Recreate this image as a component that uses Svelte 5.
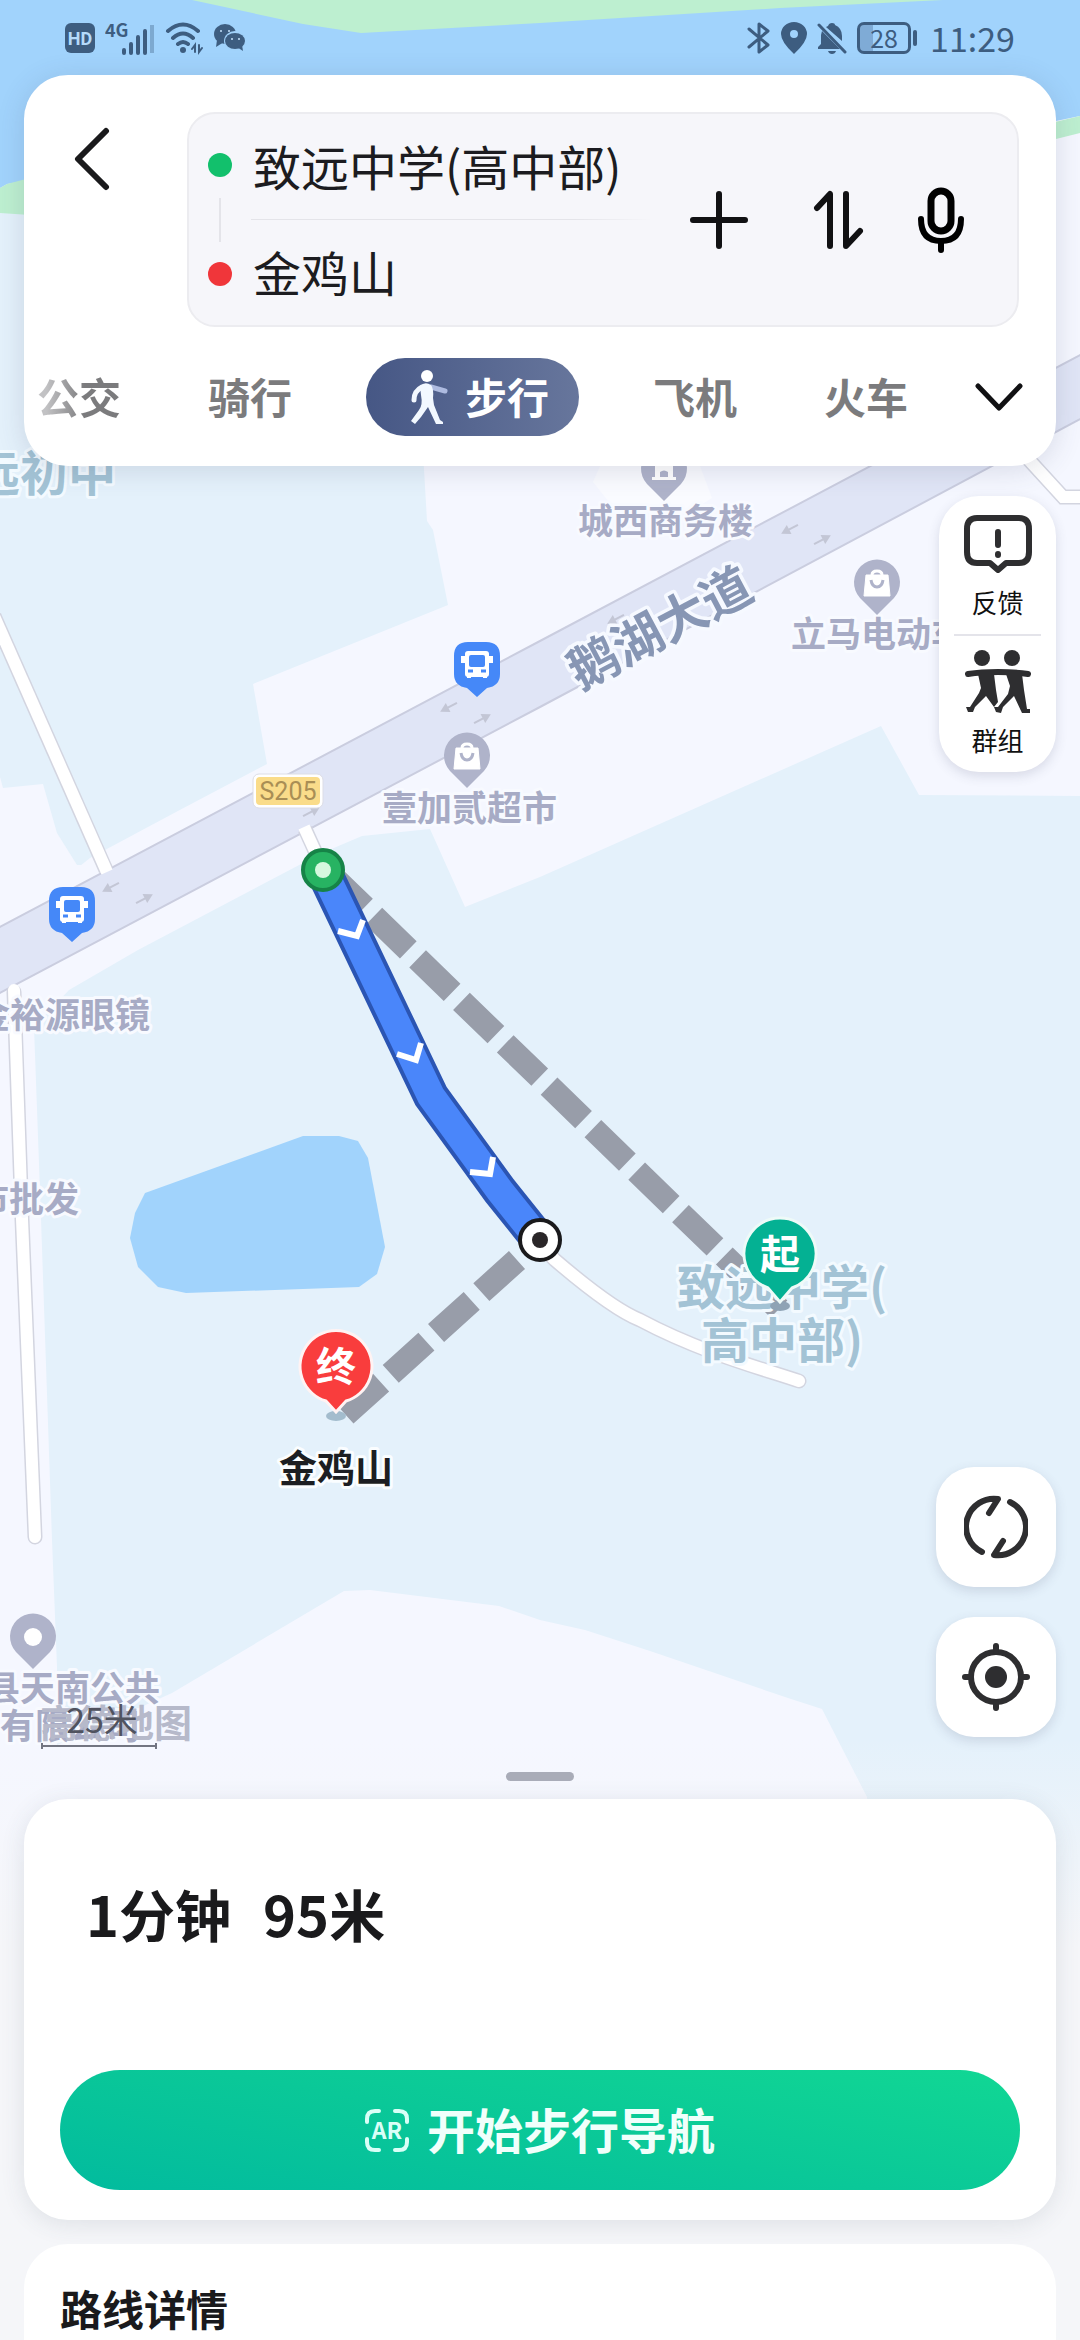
<script>
  let origin = '致远中学(高中部)';
  let destination = '金鸡山';
  let mode = '步行';

  const modes = ['公交', '骑行', '步行', '飞机', '火车'];

  const busStops = [
    { x: 477, y: 665 },
    { x: 72, y: 910 }
  ];

  const pins = [
    { x: 467, y: 756, kind: 'shop' },
    { x: 877, y: 583, kind: 'shop' },
    { x: 664, y: 469, kind: 'office' },
    { x: 33, y: 1637, kind: 'dot' }
  ];

  const places = [
    { name: '城西商务楼', x: 578, y: 534 },
    { name: '立马电动车', x: 791, y: 647 },
    { name: '壹加贰超市', x: 382, y: 821 },
    { name: '金裕源眼镜', x: 150, y: 1028, anchor: 'end' },
    { name: '市批发', x: 79, y: 1212, anchor: 'end' },
    { name: '县天南公共', x: 160, y: 1701, anchor: 'end' },
    { name: '有限公司', x: 0, y: 1739 }
  ];

  const laneArrows = [
    { x: 449, y: 707, angle: 152 },
    { x: 482, y: 719, angle: -28 },
    { x: 111, y: 887, angle: 152 },
    { x: 144, y: 899, angle: -28 },
    { x: 790, y: 529, angle: 152 },
    { x: 822, y: 540, angle: -28 },
    { x: 311, y: 812, angle: -28 },
    { x: 616, y: 619, angle: 152 }
  ];
</script>

<div class="app">
  <svg class="map" viewBox="0 0 1080 2340" preserveAspectRatio="xMidYMin slice" role="img" aria-label="地图">
    <rect width="1080" height="2340" fill="#e4f1fb" />

    <!-- land -->
    <g fill="#f5f7ff">
      <path d="M420 400L427 521L433 530L448 605L253 684L267 764L176 812L90 858L0 930V1000L1080 430V100H420Z" />
      <path d="M0 777L3 788L43 784L57 833L77 865H100L0 930Z" />
      <path d="M0 990L560 690L1080 410V796L919 795L881 726L540 877L465 907L430 829L362 836L322 853L138 950L69 990L34 1027L41 1219L52 1540L57 1667V1745L172 1693L344 1591L370 1590L499 1606L540 1620L585 1630L650 1651L788 1698L822 1709L867 1797V2340H0Z" />
    </g>
    <path d="M600 466L593 482L612 506L690 512L712 498L700 466Z" fill="#fafbff" />

    <!-- water and banks -->
    <path d="M0 0H1080V116L1056 121L900 160H60L24 181L7 184L0 188Z" fill="#a1d3fc" />
    <path d="M192 0L303 24L361 33L540 23L780 8L943 0Z" fill="#bdefd0" />
    <path d="M0 188L7 184L60 170V217L0 213Z" fill="#bdefd0" />
    <path d="M1080 116L1030 128V146L1056 139L1080 133Z" fill="#bdefd0" />
    <path d="M145 1193L303 1136H339L358 1141L368 1158L385 1247L377 1274L359 1287L186 1293L158 1287L138 1267L130 1238L135 1213Z" fill="#a1d3fc" />

    <!-- main road -->
    <path d="M-4 929L540 641L1084 353V417L540 707L-4 995Z" fill="#e0e5f6" stroke="#cacddf" stroke-width="2" />
    {#each laneArrows as arrow}
      <g transform="translate({arrow.x} {arrow.y}) rotate({arrow.angle})">
        <path d="M-9 0H3" stroke="#c3c6d5" stroke-width="2" />
        <path d="M1 -5L10 0L1 5Z" fill="#c3c6d5" />
      </g>
    {/each}

    <!-- side streets -->
    <g class="street-edge">
      <path d="M-6 616L106 870" />
      <path d="M14 992L22 1219L35 1537" stroke-linecap="round" />
      <path d="M1020 450L1063 497H1084" />
      <path d="M305 829L320 862" />
      <path d="M540 1245L555 1260C590 1290 620 1312 640 1320C700 1352 760 1368 799 1381" stroke-linecap="round" />
    </g>
    <g class="street">
      <path d="M-6 616L107 872" />
      <path d="M14 990L22 1219L35 1537" stroke-linecap="round" />
      <path d="M1020 450L1063 497H1084" />
      <path d="M304 827L320 862" />
      <path d="M540 1245L555 1260C590 1290 620 1312 640 1320C700 1352 760 1368 799 1381" stroke-linecap="round" />
    </g>

    <!-- walking links off the road network -->
    <path class="link" d="M330 874L779 1309" />
    <path class="link" d="M517 1260L344 1416" />

    <!-- place names -->
    <text class="area" x="116" y="491" text-anchor="end">远初中</text>
    <text class="area" x="677" y="1305">致远中学(</text>
    <text class="area" x="701" y="1358">高中部)</text>
    {#each places as place}
      <text class="place" x={place.x} y={place.y} text-anchor={place.anchor || 'start'}>{place.name}</text>
    {/each}
    <text class="road-name" transform="translate(660 628) rotate(-28)" y="18" text-anchor="middle">鹅湖大道</text>

    <rect x="253" y="774" width="70" height="34" rx="6" fill="#fff" stroke="#dcdde6" />
    <rect x="256" y="777" width="64" height="28" rx="4" fill="#fadc8a" />
    <text class="road-no" x="288" y="800" text-anchor="middle">S205</text>

    {#each busStops as stop}
      <g transform="translate({stop.x} {stop.y})">
        <path d="M-9 -23H9Q23 -23 23 -9V9Q23 21 10 23L0 32L-10 23Q-23 21 -23 9V-9Q-23 -23 -9 -23Z" fill="#4588f8" />
        <path d="M-9 -14H9Q12 -14 12 -11V9Q12 12 9 12H-9Q-12 12 -12 9V-11Q-12 -14 -9 -14Z" fill="#fff" />
        <path d="M-14 -9V-2M14 -9V-2M-8 10V13M8 10V13" stroke="#fff" stroke-width="4" />
        <rect x="-8" y="-10" width="16" height="12" rx="2" fill="#4588f8" />
        <path d="M-9 6H-4M4 6H9" stroke="#4588f8" stroke-width="3" />
      </g>
    {/each}

    {#each pins as pin}
      <g transform="translate({pin.x} {pin.y})">
        <path d="M0 32L-17 15A23 23 0 1 1 17 15Z" fill="#afb3ca" />
        {#if pin.kind === 'shop'}
          <path d="M-11 -8H11L13 13H-13Z" fill="#fff" stroke="#fff" stroke-linejoin="round" />
          <path d="M-5 -8Q-5 -12 0 -12Q5 -12 5 -8" fill="none" stroke="#fff" stroke-width="3" />
          <path d="M-6 -3Q-5 4 0 4Q5 4 6 -3" fill="none" stroke="#afb3ca" stroke-width="3" />
        {:else if pin.kind === 'office'}
          <path d="M-9 -10H9V8H12V11H-12V8H-9Z" fill="#fff" />
          <path d="M-4 8V3Q0 0 4 3V8Z" fill="#afb3ca" />
        {:else}
          <circle r="9" fill="#fff" />
        {/if}
      </g>
    {/each}

    <!-- route -->
    <path d="M323 870L431 1096L500 1191L540 1241" fill="none" stroke="#2b55b3" stroke-width="36" />
    <path d="M323 870L431 1096L500 1191L540 1241" fill="none" stroke="#4a86fa" stroke-width="28" />
    <g fill="none" stroke="#fff" stroke-width="6">
      <path d="M338 931L357 936L363 920" />
      <path d="M397 1054L416 1060L421 1043" />
      <path d="M470 1172L490 1174L493 1157" />
    </g>
    <circle cx="323" cy="870" r="20" fill="#27b362" stroke="#168347" stroke-width="4" />
    <circle cx="323" cy="870" r="8" fill="#d5f8de" />
    <circle cx="540" cy="1240" r="20" fill="#fff" stroke="#1a1a1c" stroke-width="4" />
    <circle cx="540" cy="1240" r="8" fill="#2a2628" />

    <ellipse cx="780" cy="1306" rx="10" ry="5" fill="#8fa3b5" />
    <path d="M780 1302L768 1288A36 36 0 1 1 792 1288Z" fill="#04b193" stroke="#eefaf8" stroke-width="3" />
    <text class="pin-text" x="780" y="1269" text-anchor="middle">起</text>

    <ellipse cx="336" cy="1416" rx="10" ry="5" fill="#a3bccd" />
    <path d="M336 1412L326 1401A36 36 0 1 1 346 1401Z" fill="#f93d3d" stroke="#fff3f3" stroke-width="3" />
    <text class="pin-text" x="336" y="1381" text-anchor="middle">终</text>
    <text class="end-name" x="336" y="1482" text-anchor="middle">金鸡山</text>

    <!-- scale and watermark -->
    <text class="watermark" x="40" y="1737">高德地图</text>
    <text class="scale" x="102" y="1733" text-anchor="middle">25米</text>
    <path d="M42 1743V1749M42 1746H156M156 1743V1749" fill="none" stroke="#6c6f7c" stroke-width="2" />
  </svg>

  <header class="status">
    <div class="status-group">
      <span class="hd">HD</span>
      <svg width="50" height="34" viewBox="0 0 50 34">
        <text x="0" y="16" font-size="18" font-weight="700" fill="currentColor">4G</text>
        <path d="M19 29V32M26 23V32M33 16V32M40 10V32" stroke="currentColor" stroke-width="4" stroke-linecap="round" />
        <path d="M47 4V32" stroke="currentColor" stroke-width="4" opacity=".35" />
      </svg>
      <svg width="38" height="34" viewBox="0 0 38 34" fill="none" stroke="currentColor" stroke-width="4" stroke-linecap="round">
        <path d="M3 10Q18 -3 33 10M8 17Q18 8 28 17M13 23Q18 19 23 23" />
        <circle cx="18" cy="29" r="3" fill="currentColor" stroke="none" />
        <path d="M30 31V24L27 28M34 24V31L37 27" stroke-width="2" />
      </svg>
      <svg width="34" height="34" viewBox="0 0 34 34" fill="currentColor">
        <ellipse cx="12" cy="13" rx="11" ry="10" />
        <path d="M4 19L3 26L11 21Z" />
        <ellipse cx="22" cy="20" rx="11" ry="10" fill="#a1d2fa" />
        <ellipse cx="22" cy="20" rx="10" ry="8" />
        <path d="M24 26L30 30L29 24Z" />
        <g fill="#c4e2fb"><circle cx="8" cy="10" r="1" /><circle cx="16" cy="10" r="1" /><circle cx="19" cy="18" r="1" /><circle cx="26" cy="18" r="1" /></g>
      </svg>
    </div>
    <div class="status-group">
      <svg width="24" height="34" viewBox="0 0 24 34" fill="none" stroke="currentColor" stroke-width="3" stroke-linejoin="round">
        <path d="M2 8L21 24L12 31V3L21 10L2 26" stroke-linecap="round" />
      </svg>
      <svg width="26" height="34" viewBox="0 0 26 34">
        <path d="M13 33Q0 21 0 13A13 12 0 0 1 26 13Q26 21 13 33ZM13 9A4 4 0 1 0 13 17A4 4 0 1 0 13 9Z" fill="currentColor" fill-rule="evenodd" />
      </svg>
      <svg width="30" height="34" viewBox="0 0 30 34" fill="currentColor">
        <path d="M11 5Q12 2 15 2Q18 2 18 4Q25 7 25 15V20L9 6ZM5 10L23 28H1V26L4 23V14ZM11 30H19Q18 33 15 33Q12 33 11 30Z" />
        <path d="M2 4L28 31" stroke="currentColor" stroke-width="3" stroke-linecap="round" />
      </svg>
      <span class="battery"><span class="level">28</span></span>
      <time class="clock">11:29</time>
    </div>
  </header>

  <section class="search">
    <div class="search-row">
      <button type="button" class="icon-btn back" aria-label="返回">
        <svg width="36" height="64" viewBox="0 0 36 64" fill="none" stroke="#1a1a1c" stroke-width="6" stroke-linecap="round" stroke-linejoin="round">
          <path d="M32 4L4 32L32 60" />
        </svg>
      </button>
      <div class="endpoints">
        <div class="track">
          <span class="dot start"></span>
          <span class="rail"></span>
          <span class="dot end"></span>
        </div>
        <div class="inputs">
          <input type="text" aria-label="起点" bind:value={origin} />
          <div class="rule"></div>
          <input type="text" aria-label="终点" bind:value={destination} />
        </div>
        <div class="actions">
          <button type="button" class="icon-btn add" aria-label="添加途经点">
            <svg width="60" height="60" viewBox="0 0 60 60" stroke="#111113" stroke-width="6" stroke-linecap="round">
              <path d="M30 4V56M4 30H56" />
            </svg>
          </button>
          <button type="button" class="icon-btn" aria-label="交换起终点">
            <svg width="60" height="60" viewBox="0 0 60 60" fill="none" stroke="#111113" stroke-width="6" stroke-linecap="round" stroke-linejoin="round">
              <path d="M9 18L22 4V56M38 4V56L52 41" />
            </svg>
          </button>
          <button type="button" class="icon-btn" aria-label="语音输入">
            <svg width="60" height="66" viewBox="-6 0 60 66" fill="none" stroke="#000">
              <rect x="14" y="4" width="20" height="40" rx="10" stroke-width="7" />
              <path d="M4 32Q4 54 24 54Q44 54 44 32M24 54V63" stroke-width="6" stroke-linecap="round" />
            </svg>
          </button>
        </div>
      </div>
    </div>

    <nav class="modes">
      <div class="mode-list">
        {#each modes as item}
          <button type="button" class="mode" class:active={item === mode} on:click={() => (mode = item)}>
            {#if item === mode}
              <svg width="40" height="56" viewBox="0 0 40 56">
                <circle cx="18" cy="7" r="6" fill="#fff" />
                <path d="M22 18L36 22" stroke="#aebbe0" stroke-width="5" stroke-linecap="round" />
                <path d="M11 17Q16 12 22 16Q25 20 24 29L25 36L31 51L34 53V55H27L19 38L12 48L6 55L2 52L10 41Q14 36 12 26Z" fill="#f2f8ff" />
                <path d="M13 18Q5 22 5 31" fill="none" stroke="#f2f8ff" stroke-width="5" stroke-linecap="round" />
              </svg>
            {/if}
            <span>{item}</span>
          </button>
        {/each}
      </div>
      <button type="button" class="icon-btn more" aria-label="更多出行方式">
        <svg width="50" height="30" viewBox="0 0 50 30" fill="none" stroke="#111113" stroke-width="5" stroke-linecap="round" stroke-linejoin="round">
          <path d="M4 4L25 26L46 4" />
        </svg>
      </button>
    </nav>
  </section>

  <main class="controls">
    <div class="panel">
      <button type="button" class="tool">
        <svg width="70" height="60" viewBox="0 0 70 60" fill="none" stroke="#2e2e30" stroke-width="6" stroke-linejoin="round" stroke-linecap="round">
          <path d="M14 4H56Q66 4 66 15V38Q66 49 56 49H43L35 56L27 49H14Q4 49 4 38V15Q4 4 14 4Z" />
          <path d="M35 18V31M35 40V41" />
        </svg>
        反馈
      </button>
      <button type="button" class="tool">
        <svg width="66" height="66" viewBox="0 0 66 66" fill="#2e2e30">
          <circle cx="17" cy="8" r="8" />
          <circle cx="47" cy="8" r="8" />
          <path d="M3 24Q16 22 33 22Q50 22 63 24" fill="none" stroke="#2e2e30" stroke-width="6" stroke-linecap="round" />
          <path d="M13 24H29L31 40L33 52L29 57L21 46L10 57L8 62L3 62L1 57L5 57L14 43L16 38Z" />
          <path d="M41 24H57L59 40L62 59H65V63H57L49 46L38 57L36 63L31 62L29 57L33 57L43 44L45 36Z" />
        </svg>
        群组
      </button>
    </div>
    <div class="stack">
      <button type="button" class="square" aria-label="刷新">
        <svg width="64" height="64" viewBox="0 0 64 64" fill="none" stroke="#2e2e30" stroke-width="6" stroke-linecap="round" stroke-linejoin="round">
          <path d="M18 57A28 28 0 0 1 34 4L25 18M46 7A28 28 0 0 1 30 60L39 46" />
        </svg>
      </button>
      <button type="button" class="square" aria-label="定位">
        <svg width="70" height="70" viewBox="0 0 70 70" fill="none" stroke="#2e2e30" stroke-width="6" stroke-linecap="round">
          <circle cx="35" cy="35" r="25" />
          <path d="M35 4V9M35 61V66M4 35H9M61 35H66" />
          <circle cx="35" cy="35" r="11" fill="#2e2e30" stroke="none" />
        </svg>
      </button>
    </div>
  </main>

  <div class="sheet">
    <div class="handle"></div>
    <section class="card summary">
      <h1><span>1分钟</span><span>95米</span></h1>
      <button type="button" class="go">
        <svg width="44" height="44" viewBox="0 0 44 44">
          <path d="M2 14V11Q2 3 10 3H14M30 3H34Q42 3 42 11V14M42 31V34Q42 42 34 42H30M14 42H10Q2 42 2 34V31" fill="none" stroke="#d9fff7" stroke-width="4" stroke-linecap="round" />
          <text x="22" y="31" text-anchor="middle" font-size="23" font-weight="700" fill="#d9fff7">AR</text>
        </svg>
        <span>开始步行导航</span>
      </button>
    </section>
    <section class="card details">
      <h2>路线详情</h2>
    </section>
  </div>
</div>

<style>
:global(body) {
  margin: 0;
}
.app {
  position: relative;
  display: flex;
  flex-direction: column;
  min-height: 100vh;
  overflow: hidden;
  font-family: 'Noto Sans CJK SC', 'Noto Sans', sans-serif;
  color: #1a1a1c;
}
.app > * {
  position: relative;
}
.app > .map {
  position: absolute;
  inset: 0;
  width: 100%;
  height: 100%;
}
svg {
  display: block;
  flex: none;
}
button {
  font-family: inherit;
  color: inherit;
  border: none;
  padding: 0;
  background: none;
  cursor: pointer;
}

/* map */
.street-edge path {
  fill: none;
  stroke: #d3d5e0;
  stroke-width: 15;
}
.street path {
  fill: none;
  stroke: #fff;
  stroke-width: 12;
}
.link {
  fill: none;
  stroke: #989da9;
  stroke-width: 24;
  stroke-dasharray: 48 13;
}
.map text {
  paint-order: stroke;
  stroke-linejoin: round;
}
.map .area {
  font-size: 48px;
  font-weight: 700;
  fill: #a3c3d5;
  stroke: #f3faff;
  stroke-width: 6px;
}
.map .place {
  font-size: 35px;
  font-weight: 700;
  fill: #a7abc5;
  stroke: #f8faff;
  stroke-width: 6px;
}
.map .road-name {
  font-size: 50px;
  font-weight: 700;
  fill: #8796b4;
  stroke: #f6f9ff;
  stroke-width: 7px;
}
.map .road-no {
  font-family: Roboto, sans-serif;
  font-size: 25px;
  fill: #a98e55;
}
.map .pin-text {
  font-size: 40px;
  font-weight: 700;
  fill: #fff;
}
.map .end-name {
  font-size: 38px;
  font-weight: 700;
  fill: #1c1e22;
  stroke: #fafdff;
  stroke-width: 6px;
}
.map .watermark {
  font-size: 38px;
  font-weight: 700;
  fill: #b6b9ca;
}
.map .scale {
  font-size: 34px;
  fill: #50535f;
}

/* status bar */
.status {
  display: flex;
  align-items: center;
  justify-content: space-between;
  height: 75px;
  padding: 0 65px;
  color: #3d5d80;
}
.status-group {
  display: flex;
  align-items: center;
  gap: 10px;
}
.hd {
  width: 30px;
  height: 30px;
  border-radius: 6px;
  background: currentColor;
  font-family: Roboto, sans-serif;
  font-size: 18px;
  font-weight: 700;
  line-height: 31px;
  text-align: center;
}
.hd::first-line {
  color: #b5dafa;
}
.battery {
  position: relative;
  width: 48px;
  height: 26px;
  margin-right: 9px;
  border: 3px solid currentColor;
  border-radius: 7px;
  background: linear-gradient(to right, #7fabd6 28%, transparent 28%);
  text-align: center;
}
.battery::after {
  content: '';
  position: absolute;
  right: -9px;
  top: 5px;
  width: 4px;
  height: 16px;
  border-radius: 2px;
  background: currentColor;
}
.level {
  display: block;
  font-size: 25px;
  line-height: 25px;
}
.clock {
  font-size: 34px;
  line-height: 40px;
}

/* search card */
.search {
  margin: 0 24px;
  padding: 37px 0 30px;
  border-radius: 44px;
  background: #fff;
  box-shadow: 0 4px 28px rgba(60, 70, 100, 0.16);
}
.search-row {
  display: flex;
  align-items: flex-start;
  padding-right: 37px;
}
.icon-btn {
  display: flex;
  align-items: center;
  justify-content: center;
  flex: none;
}
.back {
  width: 163px;
  padding: 15px 0 0 50px;
  justify-content: flex-start;
}
.endpoints {
  display: flex;
  flex: 1;
  min-width: 0;
  border: 2px solid #ececf0;
  border-radius: 28px;
  box-sizing: border-box;
  background: #f6f6fa;
}
.track {
  display: flex;
  flex-direction: column;
  align-items: center;
  justify-content: space-between;
  width: 62px;
  padding: 39px 0;
}
.dot {
  width: 24px;
  height: 24px;
  border-radius: 50%;
}
.dot.start {
  background: #12c06c;
}
.dot.end {
  background: #f0363a;
}
.rail {
  width: 2px;
  height: 44px;
  background: #e4e4e9;
}
.inputs {
  flex: 1;
  min-width: 0;
}
input {
  display: block;
  width: 100%;
  height: 105px;
  padding: 0 0 4px 2px;
  border: none;
  outline: none;
  box-sizing: border-box;
  background: none;
  font-family: inherit;
  font-size: 48px;
  color: #1c1c20;
}
.rule {
  height: 1px;
  margin-right: 36px;
  background: linear-gradient(to right, #e4e4e9 80%, transparent);
}
.actions {
  display: flex;
  align-items: center;
  gap: 43px;
  padding-right: 46px;
}
.add {
  margin-right: 16px;
}

/* travel modes */
.modes {
  display: flex;
  align-items: center;
  justify-content: space-between;
  margin-top: 31px;
  padding-right: 32px;
}
.mode-list {
  display: flex;
  gap: 61px;
}
.mode {
  display: flex;
  align-items: center;
  gap: 16px;
  height: 78px;
  padding: 0 13px;
  font-size: 42px;
  font-weight: 700;
  white-space: nowrap;
  color: #7b7b7d;
}
.mode span,
.go span {
  padding-bottom: 4px;
}
.mode:first-child {
  background: linear-gradient(to right, #c2c2c4 20%, #7b7b7d 55%);
  background-clip: text;
  color: transparent;
}
.mode.active {
  padding: 0 30px 0 43px;
  border-radius: 39px;
  background: linear-gradient(to right, #465785, #67769c);
  color: #fff;
}
.more {
  width: 50px;
}

/* floating map controls */
.controls {
  display: flex;
  flex: 1;
  flex-direction: column;
  align-items: flex-end;
  justify-content: space-between;
  padding: 30px 24px 0;
}
.panel {
  width: 117px;
  border-radius: 40px;
  background: #fff;
  box-shadow: 0 4px 12px rgba(60, 70, 100, 0.16);
}
.tool {
  display: flex;
  flex-direction: column;
  align-items: center;
  justify-content: space-between;
  width: 87px;
  height: 138px;
  margin: 0 auto;
  padding: 18px 0 12px;
  box-sizing: border-box;
  font-size: 26px;
  line-height: 40px;
  color: #111;
}
.tool + .tool {
  border-top: 2px solid #e4e4ea;
  padding-top: 14px;
}
.stack {
  display: flex;
  flex-direction: column;
  gap: 30px;
}
.square {
  display: flex;
  align-items: center;
  justify-content: center;
  width: 120px;
  height: 120px;
  border-radius: 38px;
  background: #fff;
  box-shadow: 0 4px 12px rgba(60, 70, 100, 0.16);
}

/* bottom sheet */
.sheet {
  padding: 35px 24px 0;
  background: linear-gradient(rgba(245, 246, 249, 0), #f5f6f9 210px);
}
.handle {
  width: 68px;
  height: 9px;
  margin: 0 auto 18px;
  border-radius: 5px;
  background: #a9acb8;
}
.card {
  padding: 0 36px;
  background: #fff;
  box-shadow: 0 4px 24px rgba(60, 70, 90, 0.12);
}
.summary {
  padding-top: 72px;
  padding-bottom: 30px;
  border-radius: 44px;
}
h1 {
  display: flex;
  gap: 32px;
  margin: 0;
  padding-left: 26px;
  font-size: 56px;
  font-weight: 700;
  line-height: 84px;
}
.go {
  display: flex;
  align-items: center;
  justify-content: center;
  gap: 18px;
  width: 100%;
  height: 120px;
  margin-top: 115px;
  border-radius: 60px;
  background: linear-gradient(10deg, #02bb9e, #0ac898 50%, #11d794);
  font-size: 48px;
  font-weight: 700;
  color: #f0fffb;
}
.details {
  margin-top: 24px;
  padding-top: 34px;
  padding-bottom: 2px;
  border-radius: 44px 44px 0 0;
  box-shadow: none;
}
h2 {
  margin: 0;
  font-size: 42px;
  font-weight: 700;
  line-height: 60px;
}
</style>
